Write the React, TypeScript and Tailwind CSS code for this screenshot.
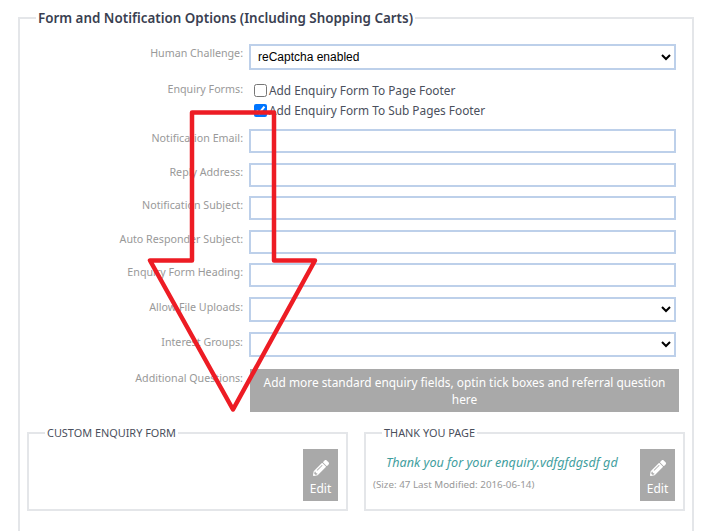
import type { ReactNode } from 'react';
import { FaPencilAlt } from 'react-icons/fa';

const textRows = [
  { label: 'Notification Email:', mt: 'mt-0' },
  { label: 'Reply Address:', mt: 'mt-[10px]' },
  { label: 'Notification Subject:', mt: 'mt-[9px]' },
  { label: 'Auto Responder Subject:', mt: 'mt-[10px]' },
  { label: 'Enquiry Form Heading:', mt: 'mt-[9px]' },
];

function Label({ children }: { children: ReactNode }) {
  return <span className="w-[216px] shrink-0 pt-[2px] text-right text-[10.7px] leading-[15px] text-[#999999]">{children}</span>;
}

function EditButton() {
  return (
    <button className="flex h-[52px] w-[35px] shrink-0 flex-col items-center justify-end bg-[#a9a9a9] pb-[4px] text-[12px] leading-[16px] text-white">
      <FaPencilAlt className="mb-[5px] h-[16px] w-[16px]" />
      Edit
    </button>
  );
}

export default function App() {
  return (
    <div className="relative h-[531px] w-[720px] overflow-hidden bg-white font-['Noto_Sans',sans-serif]">
      <div className="pl-[18px] pt-[9px]">
        <fieldset className="h-[640px] w-[676px] border-2 border-[#e4e6e9] pl-[7px] pr-[7px]">
          <legend className="ml-[9px] px-[2px] text-[13.4px] font-semibold leading-[18px] text-[#3a3f51]">
            Form and Notification Options (Including Shopping Carts)
          </legend>

          {/* Human challenge */}
          <div className="mt-[17px] flex items-start gap-[6px]">
            <Label>Human Challenge:</Label>
            <select className="h-[26px] w-[427px] border-2 border-[#bdd0ea] bg-white pl-[3px] font-['Liberation_Sans',sans-serif] text-[12px] text-black">
              <option>reCaptcha enabled</option>
            </select>
          </div>

          {/* Enquiry forms */}
          <div className="mt-[12px] flex items-start gap-[6px]">
            <span className="w-[216px] shrink-0 text-right text-[10.7px] leading-[15px] text-[#999999]">Enquiry Forms:</span>
            <div className="flex flex-col gap-[3px] pl-[5px] text-[11.85px] leading-[17px] text-[#4a4f5c]">
              <label className="flex items-center gap-[2px]">
                <input type="checkbox" className="h-[13px] w-[13px]" />
                Add Enquiry Form To Page Footer
              </label>
              <label className="flex items-center gap-[2px]">
                <input type="checkbox" defaultChecked className="h-[13px] w-[13px]" />
                Add Enquiry Form To Sub Pages Footer
              </label>
            </div>
          </div>

          {/* Text inputs */}
          <div className="mt-[10px]">
            {textRows.map((row) => (
              <div key={row.label} className={`${row.mt} flex items-start gap-[6px]`}>
                <Label>{row.label}</Label>
                <input type="text" className="h-[24px] w-[427px] border-2 border-[#bdd0ea] bg-white" />
              </div>
            ))}
          </div>

          {/* Selects */}
          <div className="mt-[10px] flex items-start gap-[6px]">
            <span className="w-[216px] shrink-0 pt-[3px] text-right text-[10.7px] leading-[15px] text-[#999999]">Allow File Uploads:</span>
            <select className="h-[25px] w-[427px] border-2 border-[#bdd0ea] bg-white"></select>
          </div>
          <div className="mt-[10px] flex items-start gap-[6px]">
            <span className="w-[216px] shrink-0 pt-[3px] text-right text-[10.7px] leading-[15px] text-[#999999]">Interest Groups:</span>
            <select className="h-[25px] w-[427px] border-2 border-[#bdd0ea] bg-white"></select>
          </div>

          {/* Additional questions */}
          <div className="mt-[12px] flex items-start gap-[7px]">
            <Label>Additional Questions:</Label>
            <button className="h-[43px] w-[429px] bg-[#a9a9a9] px-[8px] text-[11.9px] leading-[17px] text-white">
              Add more standard enquiry fields, optin tick boxes and referral question here
            </button>
          </div>

          {/* Custom form + thank you page */}
          <div className="mt-[13px] flex gap-[16px]">
            <fieldset className="h-[86px] w-[321px] border-2 border-[#e4e6e9] pl-[16px] pr-[8px]">
              <legend className="px-[2px] text-[10.9px] leading-[16px] text-[#4a4f5c]">CUSTOM ENQUIRY FORM</legend>
              <div className="mt-[8px] flex justify-end">
                <EditButton />
              </div>
            </fieldset>
            <fieldset className="h-[86px] w-[321px] border-2 border-[#e4e6e9] pl-[16px] pr-[8px]">
              <legend className="px-[2px] text-[10.9px] leading-[16px] text-[#4a4f5c]">THANK YOU PAGE</legend>
              <div className="mt-[8px] flex justify-between">
                <div className="ml-[-9px]">
                  <p className="ml-[13px] mt-[5px] text-[12.6px] italic leading-[18px] text-[#3f9e9e]">
                    Thank you for your enquiry.vdfgfdgsdf gd
                  </p>
                  <p className="mt-[6px] text-[9.8px] leading-[14px] text-[#999999]">
                    (Size: 47 Last Modified: 2016-06-14)
                  </p>
                </div>
                <EditButton />
              </div>
            </fieldset>
          </div>
        </fieldset>
      </div>

      {/* Red annotation arrow drawn over the form */}
      <svg className="pointer-events-none absolute left-0 top-0" width="720" height="531" viewBox="0 0 720 531">
        <polygon
          points="192,112.5 274,112.5 274,260.5 315,260.5 233,409.5 150,260.5 192,260.5"
          fill="none"
          stroke="#ed1c24"
          strokeWidth="4.5"
          strokeLinejoin="round"
        />
      </svg>
    </div>
  );
}
